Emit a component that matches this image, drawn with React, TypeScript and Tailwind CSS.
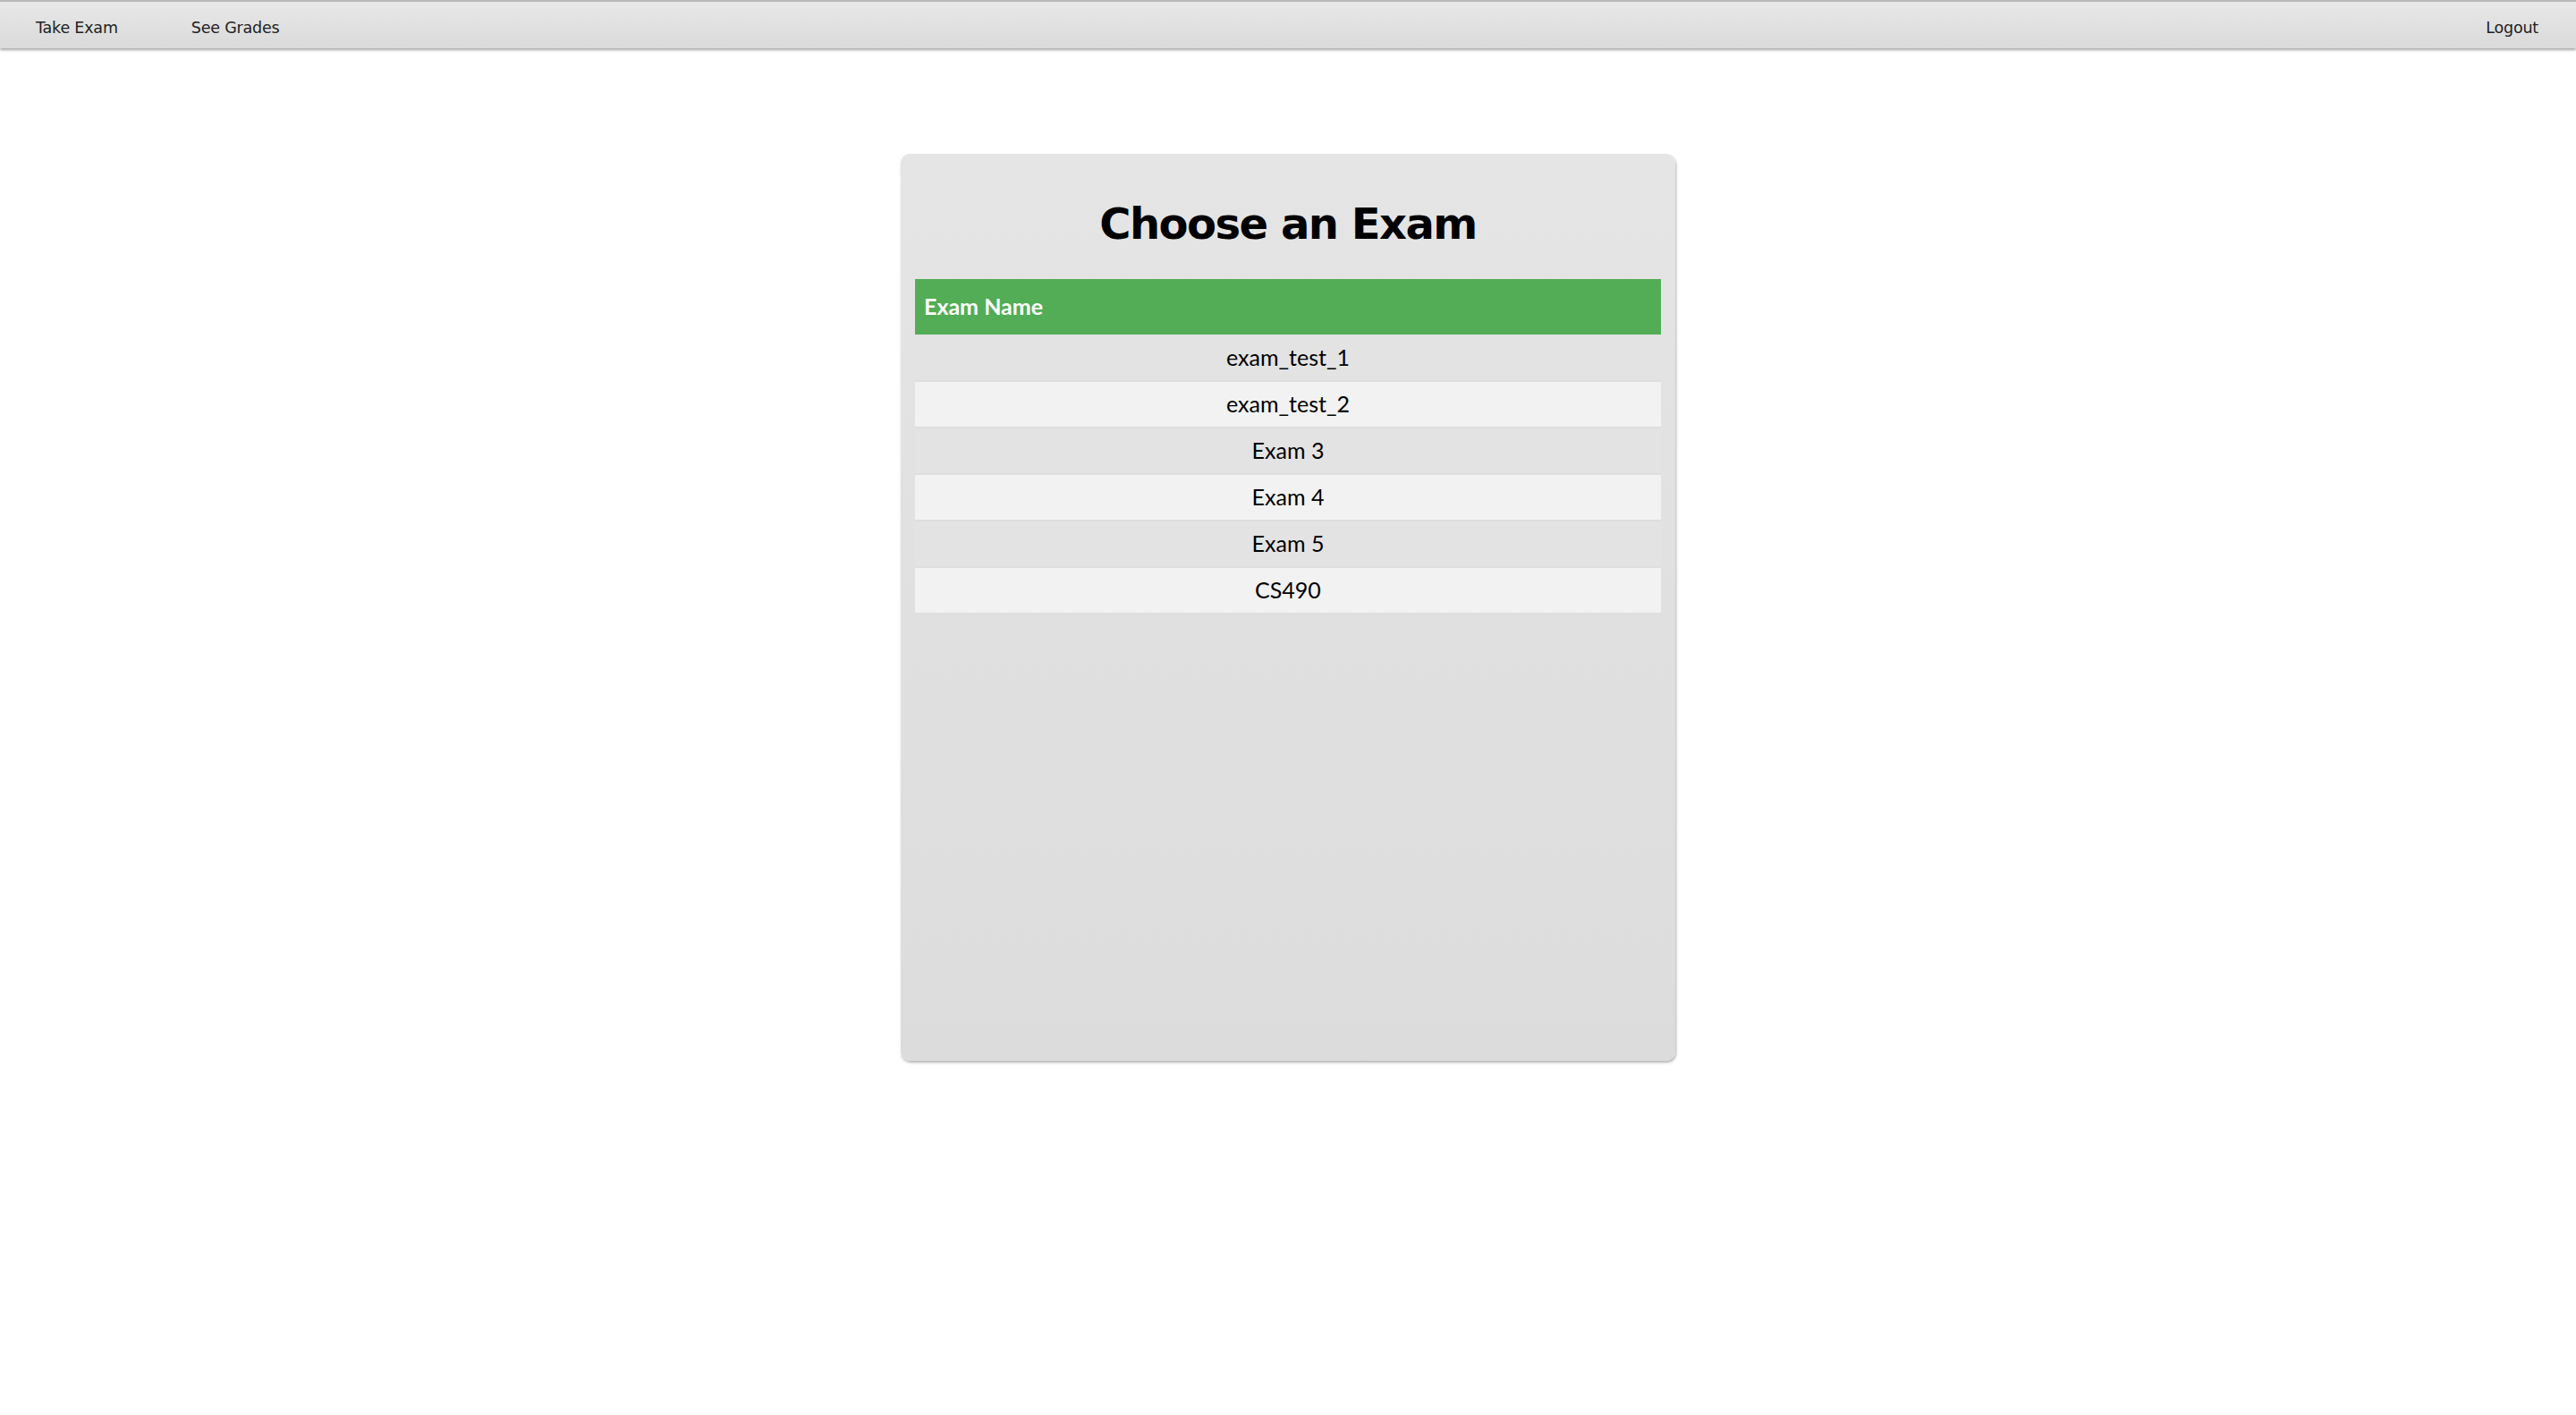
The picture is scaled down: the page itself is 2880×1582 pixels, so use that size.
import React from 'react'

const exams = ['exam_test_1', 'exam_test_2', 'Exam 3', 'Exam 4', 'Exam 5', 'CS490']

export default function App() {
  return (
    <div className="min-h-screen w-full bg-white">
      {/* Barre de navigation */}
      <nav
        className="flex h-[54px] w-full items-center justify-between border-t-2 border-[#b9b9b9] bg-gradient-to-b from-[#e8e8e8] to-[#dadada] pt-[7px] text-[#222] shadow-[0_2px_3px_rgba(0,0,0,0.35)]"
        style={{ fontFamily: '"DejaVu Sans", sans-serif' }}
      >
        <ul className="flex text-[17.5px] tracking-[-0.2px]">
          <li className="pl-[40px] pr-[40px]">Take Exam</li>
          <li className="pl-[42px] pr-[40px]">See Grades</li>
        </ul>
        <div className="pr-[42px] text-[17.5px] tracking-[-0.2px]">Logout</div>
      </nav>

      <div className="flex justify-center pt-[118px]">
        <div className="flex h-[1014px] w-[866px] flex-col rounded-[10px] bg-gradient-to-b from-[#e5e5e5] to-[#dcdcdc] px-[16px] shadow-[1px_2px_3px_rgba(0,0,0,0.3)]">
          <h1
            className="pt-[47px] pb-[31px] text-center text-[48px] font-bold leading-[62px] tracking-[-1.5px] text-black"
            style={{ fontFamily: '"DejaVu Sans", sans-serif' }}
          >
            Choose an Exam
          </h1>

          <table className="w-full border-collapse" style={{ fontFamily: 'Lato, sans-serif' }}>
            <thead>
              <tr className="bg-[#52ad56]">
                <th className="h-[62px] pl-[10px] text-left text-[25px] font-bold text-white">Exam Name</th>
              </tr>
            </thead>
            <tbody>
              {exams.map((name, idx) => (
                <tr
                  key={idx}
                  className={`${idx % 2 === 0 ? 'bg-[#e3e3e3]' : 'bg-[#f2f2f2]'} border-b-2 border-[#dedede]`}
                >
                  <td className="h-[52px] text-center text-[25px] text-black">{name}</td>
                </tr>
              ))}
            </tbody>
          </table>
        </div>
      </div>
    </div>
  )
}
